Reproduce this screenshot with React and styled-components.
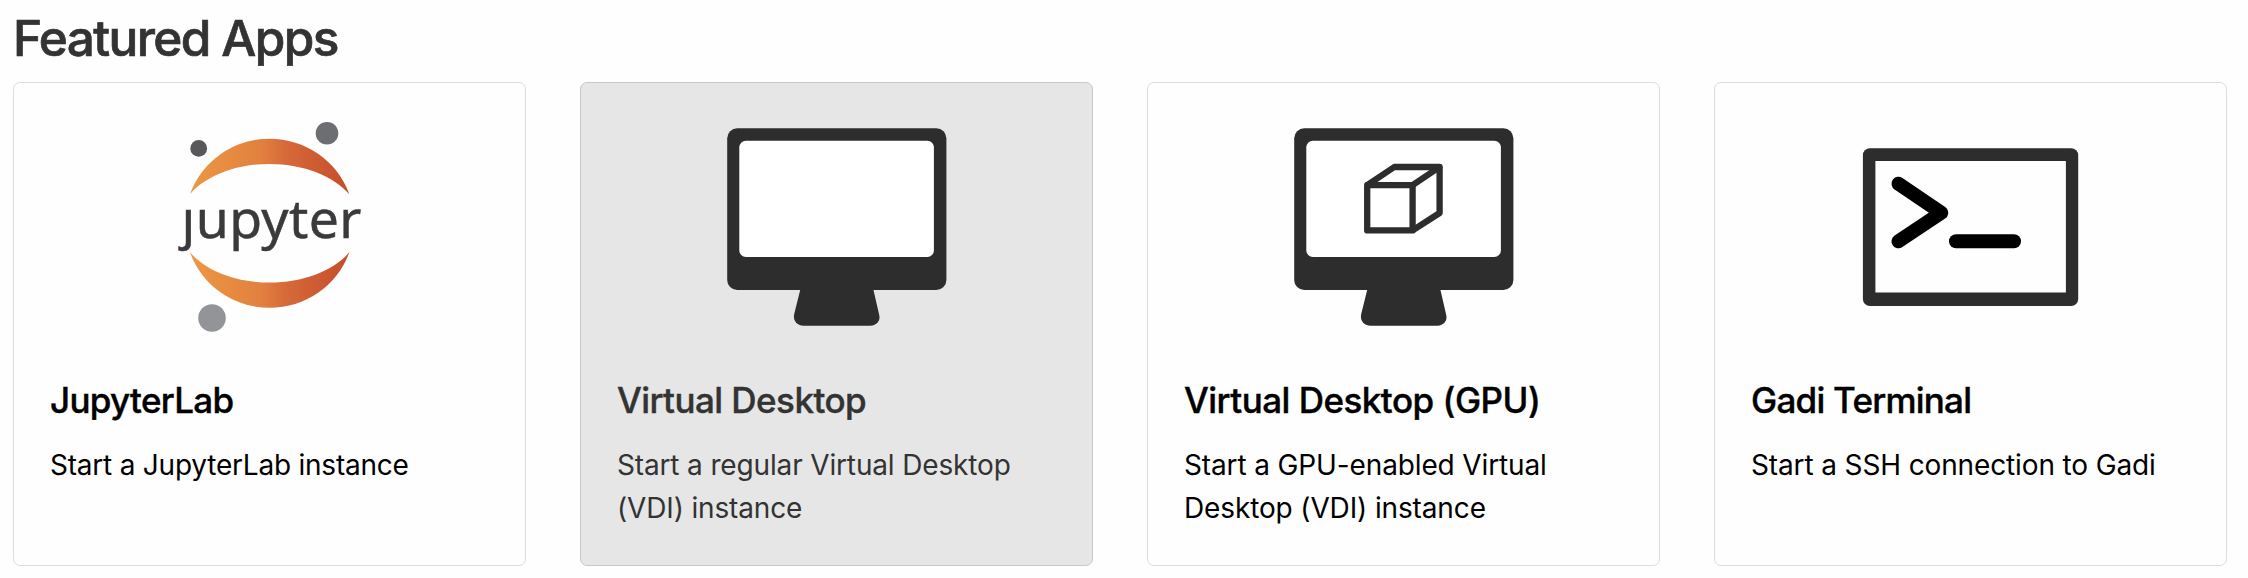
import React from "react";
import styled, { createGlobalStyle } from "styled-components";

const GlobalStyle = createGlobalStyle`
  * { box-sizing: border-box; }
  body {
    margin: 0;
    background: #fefefe;
    color: #333;
    font-family: Inter, "Liberation Sans", sans-serif;
  }
`;

const Section = styled.main`
  padding: 8px 21px 12px 13px;
`;

const Heading = styled.h2`
  margin: 0 0 14px;
  font-size: 49.5px;
  line-height: 60px;
  font-weight: 500;
  letter-spacing: -1.6px;
  -webkit-text-stroke: 0.7px currentColor;
  white-space: nowrap;
`;

const CardGrid = styled.div`
  display: grid;
  grid-template-columns: repeat(4, 513px);
  grid-auto-rows: 484px;
  column-gap: 54px;
`;

const Card = styled.a`
  display: flex;
  flex-direction: column;
  padding: 17px 36px 20px;
  border: 1px solid ${(p) => (p.$active ? "#c8c8c8" : "#ddd")};
  border-radius: 7px;
  background: ${(p) => (p.$active ? "#e6e6e6" : "#fefefe")};
  color: ${(p) => (p.$active ? "#333" : "#000")};
  text-decoration: none;
`;

const IconFrame = styled.div`
  display: flex;
  flex: none;
  justify-content: center;
  height: 279px;

  svg {
    display: block;
    width: 261px;
    height: 240px;
  }
`;

const CardTitle = styled.h3`
  margin: 0 0 23px;
  font-size: 35px;
  line-height: 42px;
  font-weight: 500;
  letter-spacing: ${(p) => p.$tracking}px;
  -webkit-text-stroke: 0.4px currentColor;
  white-space: nowrap;
`;

const CardText = styled.p`
  margin: 0;
  font-size: 28px;
  line-height: 43px;
  letter-spacing: ${(p) => p.$tracking}px;
`;

const Wordmark = styled.text`
  font-family: "Noto Sans", "Open Sans", sans-serif;
  font-size: 53.5px;
  fill: #3a3a3c;
  stroke: #3a3a3c;
  stroke-width: 0.5px;
`;

const CRESCENT =
  "M18.2646 7.13411C10.4145 7.13411 3.55872 4.2576 0 0C1.32539 3.8204 3.79556 7.13081 7.0686 9.47303C10.3417 11.8152 14.2557 13.0734 18.269 13.0734C22.2823 13.0734 26.1963 11.8152 29.4694 9.47303C32.7424 7.13081 35.2126 3.8204 36.538 0C32.9705 4.2576 26.1148 7.13411 18.2646 7.13411Z";

function JupyterIcon() {
  return (
    <svg viewBox="0 0 261 240">
      <defs>
        <linearGradient id="jupyter-orange" x1="0" x2="1" y1="0" y2="0">
          <stop offset="0" stopColor="#ec9843" />
          <stop offset="0.45" stopColor="#e2803f" />
          <stop offset="0.6" stopColor="#d66a38" />
          <stop offset="1" stopColor="#c54c2c" />
        </linearGradient>
      </defs>
      <path d={CRESCENT} fill="url(#jupyter-orange)" transform="translate(51 94.2) scale(4.36 -4.25)" />
      <path d={CRESCENT} fill="url(#jupyter-orange)" transform="translate(51 152.3) scale(4.36 4.25)" />
      <circle cx="59.7" cy="48.4" r="8.4" fill="#58585a" />
      <circle cx="188" cy="33.3" r="11.3" fill="#6d6e71" />
      <circle cx="73" cy="218" r="13.8" fill="#939498" />
      <Wordmark x="42.6" y="138" letterSpacing="0.35">ȷupyter</Wordmark>
    </svg>
  );
}

function DesktopIcon({ children }) {
  return (
    <svg viewBox="0 0 261 240">
      <path
        d="M94.7 188H167L173 214Q175.300 221 169 224.500Q167 225.700 164 225.700H98Q95 225.700 92.600 224.500Q86.500 221 88.200 214Z"
        fill="#2d2d2d"
      />
      <rect x="21.200" y="28.300" width="219.200" height="161.700" rx="10" fill="#2d2d2d" />
      <rect x="33.300" y="40.800" width="194.600" height="116.200" rx="6.500" fill="#fff" />
      {children}
    </svg>
  );
}

function Cube() {
  return (
    <g fill="none" stroke="#2d2d2d" strokeWidth="6.300" strokeLinejoin="round">
      <path d="M94.200 85.200H139.600V130.400H94.200Z" />
      <path d="M94.200 85.200L121.300 67H166.600L139.600 85.200" />
      <path d="M166.600 67V113L139.600 130.400" />
    </g>
  );
}

function TerminalIcon() {
  return (
    <svg viewBox="0 0 261 240">
      <rect x="22.900" y="48.200" width="215.300" height="157.800" rx="7" fill="#2d2d2d" />
      <rect x="35.400" y="61" width="190.500" height="131.500" fill="#fefefe" />
      <g fill="none" stroke="#000" strokeWidth="14" strokeLinecap="round" strokeLinejoin="round">
        <path d="M58.500 83.700L101.300 112.700L58.500 141.300" />
        <path d="M116 141.300H174" />
      </g>
    </svg>
  );
}

const APPS = [
  {
    title: "JupyterLab",
    text: "Start a JupyterLab instance",
    icon: <JupyterIcon />,
    titleTracking: -0.69,
    textTracking: -0.22,
  },
  {
    title: "Virtual Desktop",
    text: "Start a regular Virtual Desktop (VDI) instance",
    icon: <DesktopIcon />,
    titleTracking: -0.55,
    textTracking: -0.15,
    active: true,
  },
  {
    title: "Virtual Desktop (GPU)",
    text: "Start a GPU-enabled Virtual Desktop (VDI) instance",
    icon: (
      <DesktopIcon>
        <Cube />
      </DesktopIcon>
    ),
    titleTracking: -0.51,
    textTracking: -0.13,
  },
  {
    title: "Gadi Terminal",
    text: "Start a SSH connection to Gadi",
    icon: <TerminalIcon />,
    titleTracking: -0.76,
    textTracking: -0.13,
  },
];

export default function App() {
  return (
    <>
      <GlobalStyle />
      <Section>
        <Heading>Featured Apps</Heading>
        <CardGrid>
          {APPS.map((app) => (
            <Card key={app.title} $active={app.active}>
              <IconFrame>{app.icon}</IconFrame>
              <CardTitle $tracking={app.titleTracking}>{app.title}</CardTitle>
              <CardText $tracking={app.textTracking}>{app.text}</CardText>
            </Card>
          ))}
        </CardGrid>
      </Section>
    </>
  );
}
